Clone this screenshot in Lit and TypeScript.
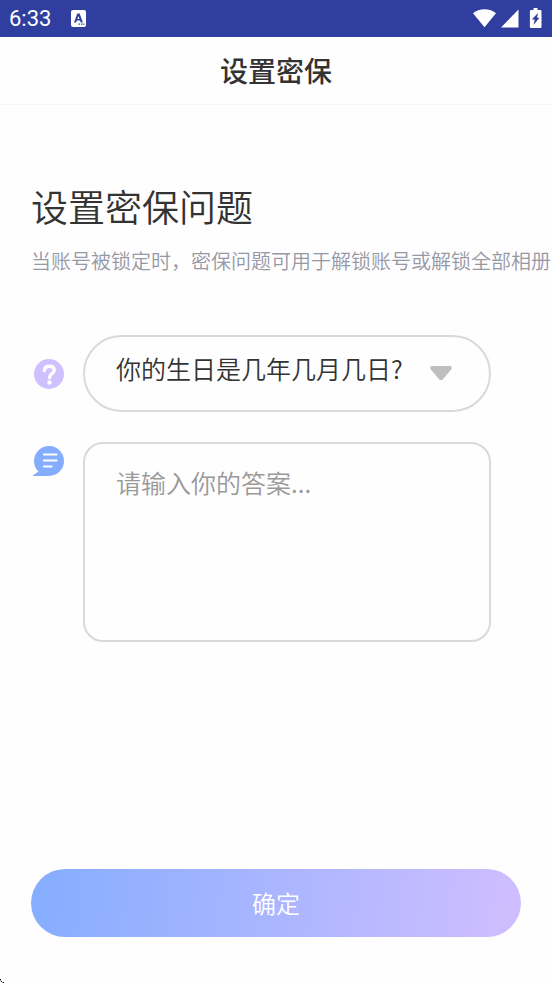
import { LitElement, html, css } from "lit";
import { customElement, state } from "lit/decorators.js";

@customElement("app-root")
export class AppRoot extends LitElement {
  @state() private answer = "";

  static styles = css`
    :host {
      display: flex;
      flex-direction: column;
      position: relative;
      min-height: 100vh;
      overflow: hidden;
      background: #fefefe;
      color: #333;
      font-family: "Noto Sans CJK SC", sans-serif;
      font-weight: 350;
    }
    * {
      box-sizing: border-box;
    }
    svg {
      display: block;
    }
    .status {
      display: flex;
      align-items: center;
      justify-content: space-between;
      height: 37px;
      padding: 0 9px;
      background: #303f9f;
      color: #fff;
    }
    .side {
      display: flex;
      align-items: center;
    }
    .clock {
      font: 400 22px/38px Roboto, sans-serif;
      margin-right: 20px;
    }
    .bar {
      display: flex;
      align-items: center;
      justify-content: center;
      height: 68px;
      padding-bottom: 2px;
      border-bottom: 1px solid #f6f6f6;
    }
    .title {
      margin: 0;
      font-size: 28px;
      line-height: 40px;
      font-weight: 500;
    }
    .body {
      flex: 1;
      display: flex;
      flex-direction: column;
      padding: 74px 31px 46px;
    }
    .heading {
      margin: 0;
      font-size: 37px;
      line-height: 54px;
      font-weight: inherit;
    }
    .hint {
      margin: 13px 0 0;
      font-size: 20px;
      line-height: 30px;
      color: #9698a5;
      white-space: nowrap;
    }
    .form {
      display: grid;
      grid-template-columns: 32px 1fr;
      column-gap: 20px;
      row-gap: 30px;
      padding-right: 30px;
      margin-top: 59px;
    }
    .icon {
      align-self: center;
    }
    .icon.top {
      align-self: start;
      padding-top: 4px;
    }
    .field {
      display: block;
      width: 100%;
      margin: 0;
      border: 2px solid #d9d9d9;
      background: transparent;
      color: #333;
      font-family: inherit;
      font-size: 25px;
      line-height: 36px;
      font-weight: inherit;
      outline: none;
    }
    .picker {
      display: grid;
      align-items: center;
    }
    .picker > * {
      grid-area: 1 / 1;
    }
    .select {
      appearance: none;
      height: 77px;
      padding: 0 56px 12px 31px;
      border-radius: 39px;
    }
    .arrow {
      justify-self: end;
      margin-right: 39px;
      pointer-events: none;
    }
    .answer {
      height: 200px;
      padding: 20px 31px;
      border-radius: 20px;
      resize: none;
    }
    .answer::placeholder {
      color: #999;
      opacity: 1;
    }
    .submit {
      margin-top: auto;
      height: 68px;
      border: 0;
      border-radius: 34px;
      background: linear-gradient(97deg, #85adff, #d0beff);
      color: #fff;
      font-family: inherit;
      font-size: 24px;
      line-height: 36px;
      font-weight: inherit;
    }
    .corner {
      position: absolute;
      left: 0;
      bottom: 0;
    }
  `;

  render() {
    return html`
      <div class="status">
        <div class="side">
          <span class="clock">6:33</span>
          <svg width="15" height="17" viewBox="0 0 15 17">
            <rect width="15" height="17" rx="2" fill="#fff" />
            <path d="M3 12.500 6.300 3.500h2.300l3.300 9H9.700L9.100 10.600H5.800L5.200 12.500zM6.400 8.900h2L7.400 5.900z" fill="#303f9f" />
            <path d="M7.500 13.400h1.400v1.400H7.500zm2.400 0h1.400v1.400H9.900zm2.300 0h1.300v1.400h-1.300z" fill="#303f9f" />
          </svg>
        </div>
        <svg width="70" height="21" viewBox="0 0 70 21" fill="#fff">
          <path d="M0 5.300C3.200 2.500 7.200 1.200 11.500 1.200S19.800 2.500 23 5.300L11.500 19.300z" />
          <path d="M45.500 1.500v18H28z" />
          <path d="M60.500 0h4v2h2.700c.8 0 1.300.5 1.300 1.300v15.400c0 .8-.5 1.300-1.300 1.300h-9c-.8 0-1.300-.5-1.300-1.300V3.300c0-.8.5-1.300 1.300-1.300h2.300z" />
          <path d="M65 5l-1 4.700h2.500L60.500 17l1.200-5.500h-2.900z" fill="#303f9f" />
        </svg>
      </div>
      <header class="bar"><h1 class="title">设置密保</h1></header>
      <main class="body">
        <h2 class="heading">设置密保问题</h2>
        <p class="hint">当账号被锁定时，密保问题可用于解锁账号或解锁全部相册</p>
        <div class="form">
          <label class="icon" for="question" aria-label="密保问题">
            <svg width="33" height="30" viewBox="0 0 33 30">
              <circle cx="18" cy="15" r="15" fill="#cfc0ff" />
              <path d="M13.500 11.500c0-2.700 2-4.200 4.900-4.200 2.900 0 4.800 1.500 4.800 3.900 0 3.300-4.500 3.300-4.500 6.400v.9" fill="none" stroke="#fff" stroke-width="3.400" stroke-linecap="round" />
              <circle cx="18.500" cy="23.500" r="2.200" fill="#fff" />
            </svg>
          </label>
          <div class="picker">
            <select class="field select" id="question">
              <option>你的生日是几年几月几日?</option>
            </select>
            <svg class="arrow" width="22" height="15" viewBox="0 0 22 15">
              <path d="M2 0h18c1.600 0 2.300 2 1.200 3.400l-8.500 10c-.9 1.100-2.500 1.100-3.400 0L.8 3.400C-.3 2 .4 0 2 0z" fill="#bfbfbf" />
            </svg>
          </div>
          <label class="icon top" for="answer" aria-label="答案">
            <svg width="33" height="30" viewBox="0 0 33 30">
              <g fill="#85adff">
                <circle cx="18" cy="15" r="15" />
                <path d="M18 30H2.600c-.6 0-.7-.6-.2-.9L7.500 25.500z" />
              </g>
              <path d="M13 8.500h12.500M13 14.500h12.500M13 20.500h7.500" stroke="#fff" stroke-width="2.200" stroke-linecap="round" />
            </svg>
          </label>
          <textarea
            class="field answer"
            id="answer"
            placeholder="请输入你的答案..."
            .value=${this.answer}
            @input=${(e: Event) => (this.answer = (e.target as HTMLTextAreaElement).value)}
          ></textarea>
        </div>
        <button class="submit" type="button">确定</button>
      </main>
      <svg class="corner" width="4" height="4" viewBox="0 0 4 4" aria-hidden="true">
        <path d="M0 0h1v1H0zM1 2h1v1H1zM3 3h1v1H3z" fill="#111" />
        <path d="M0 1h1v1H0zM2 3h1v1H2z" fill="#888" />
      </svg>
    `;
  }
}
